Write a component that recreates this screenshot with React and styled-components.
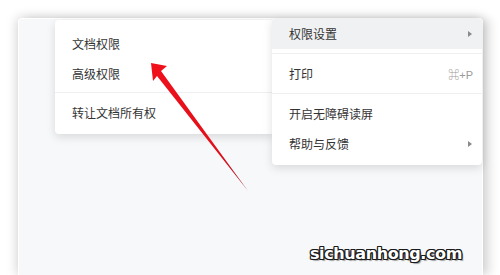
import React from 'react';
import styled, { createGlobalStyle } from 'styled-components';

const Global = createGlobalStyle`
  html, body { margin: 0; padding: 0; background: #ffffff; }
  body { width: 500px; height: 275px; overflow: hidden; font-family: "Noto Sans CJK SC", "Noto Sans", sans-serif; }
`

const Page = styled.div`
  width: 500px;
  height: 275px;
  box-sizing: border-box;
  padding: 18px 17px 0 18px;
`

const Panel = styled.section`
  position: relative;
  width: 465px;
  height: 257px;
  background-color: #f7f8fa;
  border: 1px solid #ffffff;
  border-bottom: none;
  border-radius: 4px 4px 0 0;
  box-sizing: border-box;
  box-shadow: 0 0 12px rgba(0, 0, 0, 0.22), 10px 0 8px rgba(0, 0, 0, 0.06);
`

const Menu = styled.ul`
  position: absolute;
  left: ${props => props.left}px;
  top: ${props => props.top}px;
  width: ${props => props.width}px;
  z-index: ${props => props.z};
  margin: 0;
  padding: ${props => props.pad};
  list-style: none;
  background-color: #ffffff;
  border-radius: 4px;
  box-shadow: 0 3px 10px rgba(0, 0, 0, 0.13);
  box-sizing: border-box;
`

const Item = styled.li`
  height: ${props => props.h}px;
  display: flex;
  align-items: center;
  justify-content: space-between;
  padding: 0 10px 0 17px;
  font-size: 12px;
  color: #333333;
  background-color: ${props => props.active ? '#f0f1f2' : 'transparent'};
  border-radius: ${props => props.active ? '4px 4px 0 0' : '0'};
`

const Shortcut = styled.span`
  font-family: "Liberation Sans", "Noto Sans CJK SC", sans-serif;
  font-size: 11px;
  color: #9a9a9a;
  margin-right: -1px;
`

const Caret = styled.span`
  width: 0;
  height: 0;
  border-top: 3px solid transparent;
  border-bottom: 3px solid transparent;
  border-left: 4px solid #8a8a8a;
`

const Divider = styled.li`
  height: 1px;
  margin: 4px 0;
  background-color: #eeeff0;
`

const Watermark = styled.span`
  position: absolute;
  left: 291px;
  top: 225px;
  font-family: "DejaVu Sans", sans-serif;
  font-weight: 700;
  font-size: 16px;
  letter-spacing: -0.4px;
  color: #ffffff;
  text-shadow:
    1px 0 0 #1a1a1a, -1px 0 0 #1a1a1a, 0 1px 0 #1a1a1a, 0 -1px 0 #1a1a1a,
    1px 1px 0 #1a1a1a, -1px -1px 0 #1a1a1a, 1px -1px 0 #1a1a1a, -1px 1px 0 #1a1a1a,
    2px 2px 1px rgba(0, 0, 0, 0.35);
  z-index: 5;
`

const ArrowSvg = styled.svg`
  position: absolute;
  left: 0;
  top: 0;
  z-index: 4;
  pointer-events: none;
`

function Arrow() {
  return (
    <ArrowSvg width="465" height="257" viewBox="18 18 465 257">
      <defs>
        <linearGradient id="ar" x1="0" y1="0" x2="1" y2="1">
          <stop offset="0" stopColor="#f0101c" />
          <stop offset="0.7" stopColor="#e0101a" />
          <stop offset="1" stopColor="#a01830" />
        </linearGradient>
      </defs>
      <polygon
        points="150,62 166,65 160,70 247,190 156,75 152,80"
        fill="url(#ar)"
      />
    </ArrowSvg>
  )
}

export default function App() {
  return (
    <Page>
      <Global />
      <Panel>
        <Menu left={36} top={1} width={219} z={2} pad="8px 0 7px">
          <Item h={30}>文档权限</Item>
          <Item h={30}>高级权限</Item>
          <Divider />
          <Item h={30}>转让文档所有权</Item>
        </Menu>
        <Menu left={253} top={-1} width={210} z={3} pad="0 0 7px">
          <Item h={31} active>权限设置<Caret /></Item>
          <Divider />
          <Item h={31}>打印<Shortcut>⌘+P</Shortcut></Item>
          <Divider />
          <Item h={31}>开启无障碍读屏</Item>
          <Item h={29}>帮助与反馈<Caret /></Item>
        </Menu>
        <Arrow />
        <Watermark>sichuanhong.com</Watermark>
      </Panel>
    </Page>
  )
}
